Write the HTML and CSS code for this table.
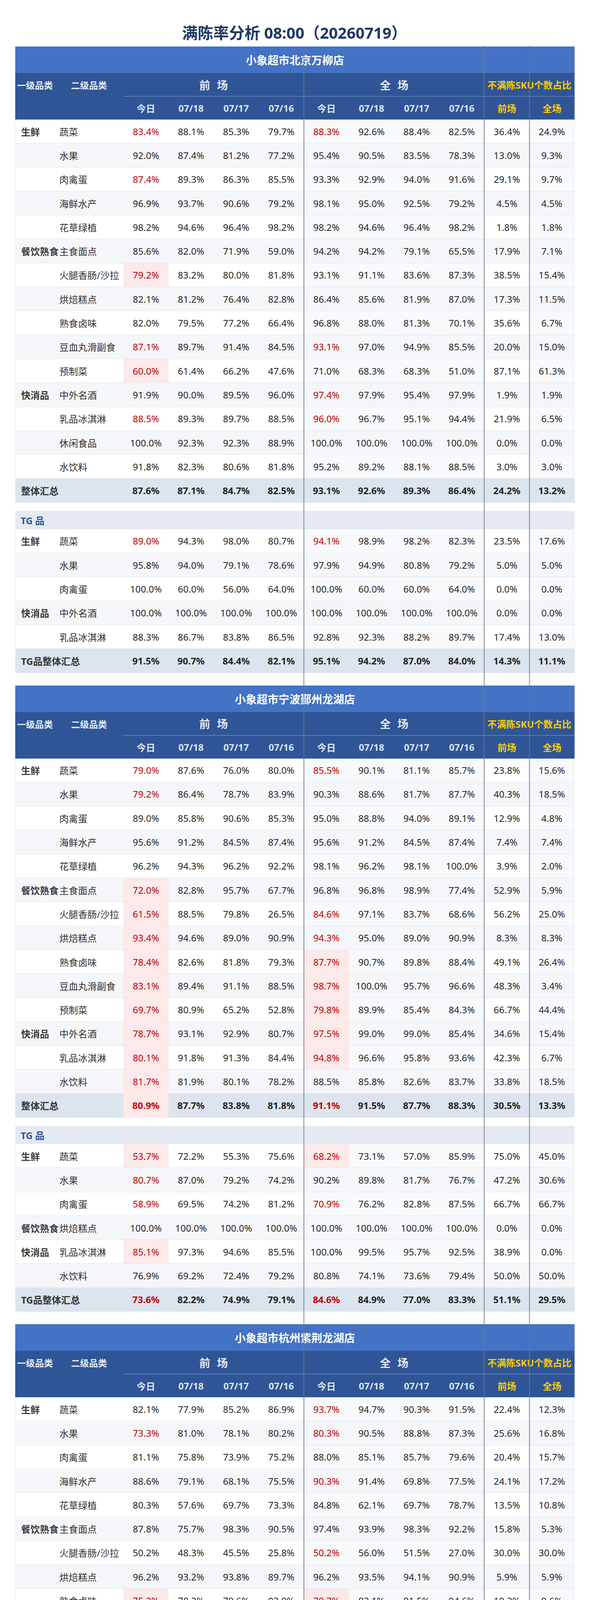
FILE: index.html
```html
<!DOCTYPE html>
<html lang="zh-CN">
<head>
<meta charset="utf-8">
<title>满陈率分析</title>
<link rel="stylesheet" href="styles.css">
</head>
<body>
<main class="page">
  <h1 class="title">满陈率分析 08:00（20260719）</h1>
  <div class="board">

    <!-- ========== 北京万柳店 ========== -->
    <section class="store">
      <div class="store-name">小象超市北京万柳店</div>
      <div class="row head head-a"><span class="cat">一级品类</span><span class="cat">二级品类</span><span class="group">前 场</span><span class="group">全 场</span><span class="sku">不满陈SKU个数占比</span></div>
      <div class="row head head-b"><span></span><span></span><span>今日</span><span>07/18</span><span>07/17</span><span>07/16</span><span>今日</span><span>07/18</span><span>07/17</span><span>07/16</span><span class="y">前场</span><span class="y">全场</span></div>
      <div class="rows">
        <div class="row data"><span class="c1">生鲜</span><span class="c2">蔬菜</span><span class="r">83.4%</span><span>88.1%</span><span>85.3%</span><span>79.7%</span><span class="r">88.3%</span><span>92.6%</span><span>88.4%</span><span>82.5%</span><span>36.4%</span><span>24.9%</span></div>
        <div class="row data"><span class="c1"></span><span class="c2">水果</span><span>92.0%</span><span>87.4%</span><span>81.2%</span><span>77.2%</span><span>95.4%</span><span>90.5%</span><span>83.5%</span><span>78.3%</span><span>13.0%</span><span>9.3%</span></div>
        <div class="row data"><span class="c1"></span><span class="c2">肉禽蛋</span><span class="r">87.4%</span><span>89.3%</span><span>86.3%</span><span>85.5%</span><span>93.3%</span><span>92.9%</span><span>94.0%</span><span>91.6%</span><span>29.1%</span><span>9.7%</span></div>
        <div class="row data"><span class="c1"></span><span class="c2">海鲜水产</span><span>96.9%</span><span>93.7%</span><span>90.6%</span><span>79.2%</span><span>98.1%</span><span>95.0%</span><span>92.5%</span><span>79.2%</span><span>4.5%</span><span>4.5%</span></div>
        <div class="row data"><span class="c1"></span><span class="c2">花草绿植</span><span>98.2%</span><span>94.6%</span><span>96.4%</span><span>98.2%</span><span>98.2%</span><span>94.6%</span><span>96.4%</span><span>98.2%</span><span>1.8%</span><span>1.8%</span></div>
        <div class="row data"><span class="c1">餐饮熟食</span><span class="c2">主食面点</span><span>85.6%</span><span>82.0%</span><span>71.9%</span><span>59.0%</span><span>94.2%</span><span>94.2%</span><span>79.1%</span><span>65.5%</span><span>17.9%</span><span>7.1%</span></div>
        <div class="row data"><span class="c1"></span><span class="c2">火腿香肠/沙拉</span><span class="r p">79.2%</span><span>83.2%</span><span>80.0%</span><span>81.8%</span><span>93.1%</span><span>91.1%</span><span>83.6%</span><span>87.3%</span><span>38.5%</span><span>15.4%</span></div>
        <div class="row data"><span class="c1"></span><span class="c2">烘焙糕点</span><span>82.1%</span><span>81.2%</span><span>76.4%</span><span>82.8%</span><span>86.4%</span><span>85.6%</span><span>81.9%</span><span>87.0%</span><span>17.3%</span><span>11.5%</span></div>
        <div class="row data"><span class="c1"></span><span class="c2">熟食卤味</span><span>82.0%</span><span>79.5%</span><span>77.2%</span><span>66.4%</span><span>96.8%</span><span>88.0%</span><span>81.3%</span><span>70.1%</span><span>35.6%</span><span>6.7%</span></div>
        <div class="row data"><span class="c1"></span><span class="c2">豆血丸滑副食</span><span class="r">87.1%</span><span>89.7%</span><span>91.4%</span><span>84.5%</span><span class="r">93.1%</span><span>97.0%</span><span>94.9%</span><span>85.5%</span><span>20.0%</span><span>15.0%</span></div>
        <div class="row data"><span class="c1"></span><span class="c2">预制菜</span><span class="r p">60.0%</span><span>61.4%</span><span>66.2%</span><span>47.6%</span><span>71.0%</span><span>68.3%</span><span>68.3%</span><span>51.0%</span><span>87.1%</span><span>61.3%</span></div>
        <div class="row data"><span class="c1">快消品</span><span class="c2">中外名酒</span><span>91.9%</span><span>90.0%</span><span>89.5%</span><span>96.0%</span><span class="r">97.4%</span><span>97.9%</span><span>95.4%</span><span>97.9%</span><span>1.9%</span><span>1.9%</span></div>
        <div class="row data"><span class="c1"></span><span class="c2">乳品冰淇淋</span><span class="r">88.5%</span><span>89.3%</span><span>89.7%</span><span>88.5%</span><span class="r">96.0%</span><span>96.7%</span><span>95.1%</span><span>94.4%</span><span>21.9%</span><span>6.5%</span></div>
        <div class="row data"><span class="c1"></span><span class="c2">休闲食品</span><span>100.0%</span><span>92.3%</span><span>92.3%</span><span>88.9%</span><span>100.0%</span><span>100.0%</span><span>100.0%</span><span>100.0%</span><span>0.0%</span><span>0.0%</span></div>
        <div class="row data"><span class="c1"></span><span class="c2">水饮料</span><span>91.8%</span><span>82.3%</span><span>80.6%</span><span>81.8%</span><span>95.2%</span><span>89.2%</span><span>88.1%</span><span>88.5%</span><span>3.0%</span><span>3.0%</span></div>
      </div>
      <div class="row total"><span class="lbl">整体汇总</span><span>87.6%</span><span>87.1%</span><span>84.7%</span><span>82.5%</span><span>93.1%</span><span>92.6%</span><span>89.3%</span><span>86.4%</span><span>24.2%</span><span>13.2%</span></div>

      <div class="tg">
        <div class="tg-head">TG 品</div>
        <div class="rows">
          <div class="row data"><span class="c1">生鲜</span><span class="c2">蔬菜</span><span class="r">89.0%</span><span>94.3%</span><span>98.0%</span><span>80.7%</span><span class="r">94.1%</span><span>98.9%</span><span>98.2%</span><span>82.3%</span><span>23.5%</span><span>17.6%</span></div>
          <div class="row data"><span class="c1"></span><span class="c2">水果</span><span>95.8%</span><span>94.0%</span><span>79.1%</span><span>78.6%</span><span>97.9%</span><span>94.9%</span><span>80.8%</span><span>79.2%</span><span>5.0%</span><span>5.0%</span></div>
          <div class="row data"><span class="c1"></span><span class="c2">肉禽蛋</span><span>100.0%</span><span>60.0%</span><span>56.0%</span><span>64.0%</span><span>100.0%</span><span>60.0%</span><span>60.0%</span><span>64.0%</span><span>0.0%</span><span>0.0%</span></div>
          <div class="row data"><span class="c1">快消品</span><span class="c2">中外名酒</span><span>100.0%</span><span>100.0%</span><span>100.0%</span><span>100.0%</span><span>100.0%</span><span>100.0%</span><span>100.0%</span><span>100.0%</span><span>0.0%</span><span>0.0%</span></div>
          <div class="row data"><span class="c1"></span><span class="c2">乳品冰淇淋</span><span>88.3%</span><span>86.7%</span><span>83.8%</span><span>86.5%</span><span>92.8%</span><span>92.3%</span><span>88.2%</span><span>89.7%</span><span>17.4%</span><span>13.0%</span></div>
        </div>
        <div class="row total"><span class="lbl">TG品整体汇总</span><span>91.5%</span><span>90.7%</span><span>84.4%</span><span>82.1%</span><span>95.1%</span><span>94.2%</span><span>87.0%</span><span>84.0%</span><span>14.3%</span><span>11.1%</span></div>
      </div>
    </section>

    <!-- ========== 宁波鄞州龙湖店 ========== -->
    <section class="store">
      <div class="store-name">小象超市宁波鄞州龙湖店</div>
      <div class="row head head-a"><span class="cat">一级品类</span><span class="cat">二级品类</span><span class="group">前 场</span><span class="group">全 场</span><span class="sku">不满陈SKU个数占比</span></div>
      <div class="row head head-b"><span></span><span></span><span>今日</span><span>07/18</span><span>07/17</span><span>07/16</span><span>今日</span><span>07/18</span><span>07/17</span><span>07/16</span><span class="y">前场</span><span class="y">全场</span></div>
      <div class="rows">
        <div class="row data"><span class="c1">生鲜</span><span class="c2">蔬菜</span><span class="r">79.0%</span><span>87.6%</span><span>76.0%</span><span>80.0%</span><span class="r">85.5%</span><span>90.1%</span><span>81.1%</span><span>85.7%</span><span>23.8%</span><span>15.6%</span></div>
        <div class="row data"><span class="c1"></span><span class="c2">水果</span><span class="r">79.2%</span><span>86.4%</span><span>78.7%</span><span>83.9%</span><span>90.3%</span><span>88.6%</span><span>81.7%</span><span>87.7%</span><span>40.3%</span><span>18.5%</span></div>
        <div class="row data"><span class="c1"></span><span class="c2">肉禽蛋</span><span>89.0%</span><span>85.8%</span><span>90.6%</span><span>85.3%</span><span>95.0%</span><span>88.8%</span><span>94.0%</span><span>89.1%</span><span>12.9%</span><span>4.8%</span></div>
        <div class="row data"><span class="c1"></span><span class="c2">海鲜水产</span><span>95.6%</span><span>91.2%</span><span>84.5%</span><span>87.4%</span><span>95.6%</span><span>91.2%</span><span>84.5%</span><span>87.4%</span><span>7.4%</span><span>7.4%</span></div>
        <div class="row data"><span class="c1"></span><span class="c2">花草绿植</span><span>96.2%</span><span>94.3%</span><span>96.2%</span><span>92.2%</span><span>98.1%</span><span>96.2%</span><span>98.1%</span><span>100.0%</span><span>3.9%</span><span>2.0%</span></div>
        <div class="row data"><span class="c1">餐饮熟食</span><span class="c2">主食面点</span><span class="r p">72.0%</span><span>82.8%</span><span>95.7%</span><span>67.7%</span><span>96.8%</span><span>96.8%</span><span>98.9%</span><span>77.4%</span><span>52.9%</span><span>5.9%</span></div>
        <div class="row data"><span class="c1"></span><span class="c2">火腿香肠/沙拉</span><span class="r p">61.5%</span><span>88.5%</span><span>79.8%</span><span>26.5%</span><span class="r">84.6%</span><span>97.1%</span><span>83.7%</span><span>68.6%</span><span>56.2%</span><span>25.0%</span></div>
        <div class="row data"><span class="c1"></span><span class="c2">烘焙糕点</span><span class="r p">93.4%</span><span>94.6%</span><span>89.0%</span><span>90.9%</span><span class="r">94.3%</span><span>95.0%</span><span>89.0%</span><span>90.9%</span><span>8.3%</span><span>8.3%</span></div>
        <div class="row data"><span class="c1"></span><span class="c2">熟食卤味</span><span class="r p">78.4%</span><span>82.6%</span><span>81.8%</span><span>79.3%</span><span class="r p">87.7%</span><span>90.7%</span><span>89.8%</span><span>88.4%</span><span>49.1%</span><span>26.4%</span></div>
        <div class="row data"><span class="c1"></span><span class="c2">豆血丸滑副食</span><span class="r p">83.1%</span><span>89.4%</span><span>91.1%</span><span>88.5%</span><span class="r p">98.7%</span><span>100.0%</span><span>95.7%</span><span>96.6%</span><span>48.3%</span><span>3.4%</span></div>
        <div class="row data"><span class="c1"></span><span class="c2">预制菜</span><span class="r p">69.7%</span><span>80.9%</span><span>65.2%</span><span>52.8%</span><span class="r p">79.8%</span><span>89.9%</span><span>85.4%</span><span>84.3%</span><span>66.7%</span><span>44.4%</span></div>
        <div class="row data"><span class="c1">快消品</span><span class="c2">中外名酒</span><span class="r p">78.7%</span><span>93.1%</span><span>92.9%</span><span>80.7%</span><span class="r p">97.5%</span><span>99.0%</span><span>99.0%</span><span>85.4%</span><span>34.6%</span><span>15.4%</span></div>
        <div class="row data"><span class="c1"></span><span class="c2">乳品冰淇淋</span><span class="r p">80.1%</span><span>91.8%</span><span>91.3%</span><span>84.4%</span><span class="r p">94.8%</span><span>96.6%</span><span>95.8%</span><span>93.6%</span><span>42.3%</span><span>6.7%</span></div>
        <div class="row data"><span class="c1"></span><span class="c2">水饮料</span><span class="r p">81.7%</span><span>81.9%</span><span>80.1%</span><span>78.2%</span><span>88.5%</span><span>85.8%</span><span>82.6%</span><span>83.7%</span><span>33.8%</span><span>18.5%</span></div>
      </div>
      <div class="row total"><span class="lbl">整体汇总</span><span class="r p">80.9%</span><span>87.7%</span><span>83.8%</span><span>81.8%</span><span class="r">91.1%</span><span>91.5%</span><span>87.7%</span><span>88.3%</span><span>30.5%</span><span>13.3%</span></div>

      <div class="tg">
        <div class="tg-head">TG 品</div>
        <div class="rows">
          <div class="row data"><span class="c1">生鲜</span><span class="c2">蔬菜</span><span class="r p">53.7%</span><span>72.2%</span><span>55.3%</span><span>75.6%</span><span class="r p">68.2%</span><span>73.1%</span><span>57.0%</span><span>85.9%</span><span>75.0%</span><span>45.0%</span></div>
          <div class="row data"><span class="c1"></span><span class="c2">水果</span><span class="r">80.7%</span><span>87.0%</span><span>79.2%</span><span>74.2%</span><span>90.2%</span><span>89.8%</span><span>81.7%</span><span>76.7%</span><span>47.2%</span><span>30.6%</span></div>
          <div class="row data"><span class="c1"></span><span class="c2">肉禽蛋</span><span class="r">58.9%</span><span>69.5%</span><span>74.2%</span><span>81.2%</span><span class="r">70.9%</span><span>76.2%</span><span>82.8%</span><span>87.5%</span><span>66.7%</span><span>66.7%</span></div>
          <div class="row data"><span class="c1">餐饮熟食</span><span class="c2">烘焙糕点</span><span>100.0%</span><span>100.0%</span><span>100.0%</span><span>100.0%</span><span>100.0%</span><span>100.0%</span><span>100.0%</span><span>100.0%</span><span>0.0%</span><span>0.0%</span></div>
          <div class="row data"><span class="c1">快消品</span><span class="c2">乳品冰淇淋</span><span class="r p">85.1%</span><span>97.3%</span><span>94.6%</span><span>85.5%</span><span>100.0%</span><span>99.5%</span><span>95.7%</span><span>92.5%</span><span>38.9%</span><span>0.0%</span></div>
          <div class="row data"><span class="c1"></span><span class="c2">水饮料</span><span>76.9%</span><span>69.2%</span><span>72.4%</span><span>79.2%</span><span>80.8%</span><span>74.1%</span><span>73.6%</span><span>79.4%</span><span>50.0%</span><span>50.0%</span></div>
        </div>
        <div class="row total"><span class="lbl">TG品整体汇总</span><span class="r">73.6%</span><span>82.2%</span><span>74.9%</span><span>79.1%</span><span class="r">84.6%</span><span>84.9%</span><span>77.0%</span><span>83.3%</span><span>51.1%</span><span>29.5%</span></div>
      </div>
    </section>

    <!-- ========== 杭州紫荆龙湖店 ========== -->
    <section class="store">
      <div class="store-name">小象超市杭州紫荆龙湖店</div>
      <div class="row head head-a"><span class="cat">一级品类</span><span class="cat">二级品类</span><span class="group">前 场</span><span class="group">全 场</span><span class="sku">不满陈SKU个数占比</span></div>
      <div class="row head head-b"><span></span><span></span><span>今日</span><span>07/18</span><span>07/17</span><span>07/16</span><span>今日</span><span>07/18</span><span>07/17</span><span>07/16</span><span class="y">前场</span><span class="y">全场</span></div>
      <div class="rows">
        <div class="row data"><span class="c1">生鲜</span><span class="c2">蔬菜</span><span>82.1%</span><span>77.9%</span><span>85.2%</span><span>86.9%</span><span class="r">93.7%</span><span>94.7%</span><span>90.3%</span><span>91.5%</span><span>22.4%</span><span>12.3%</span></div>
        <div class="row data"><span class="c1"></span><span class="c2">水果</span><span class="r">73.3%</span><span>81.0%</span><span>78.1%</span><span>80.2%</span><span class="r">80.3%</span><span>90.5%</span><span>88.8%</span><span>87.3%</span><span>25.6%</span><span>16.8%</span></div>
        <div class="row data"><span class="c1"></span><span class="c2">肉禽蛋</span><span>81.1%</span><span>75.8%</span><span>73.9%</span><span>75.2%</span><span>88.0%</span><span>85.1%</span><span>85.7%</span><span>79.6%</span><span>20.4%</span><span>15.7%</span></div>
        <div class="row data"><span class="c1"></span><span class="c2">海鲜水产</span><span>88.6%</span><span>79.1%</span><span>68.1%</span><span>75.5%</span><span class="r">90.3%</span><span>91.4%</span><span>69.8%</span><span>77.5%</span><span>24.1%</span><span>17.2%</span></div>
        <div class="row data"><span class="c1"></span><span class="c2">花草绿植</span><span>80.3%</span><span>57.6%</span><span>69.7%</span><span>73.3%</span><span>84.8%</span><span>62.1%</span><span>69.7%</span><span>78.7%</span><span>13.5%</span><span>10.8%</span></div>
        <div class="row data"><span class="c1">餐饮熟食</span><span class="c2">主食面点</span><span>87.8%</span><span>75.7%</span><span>98.3%</span><span>90.5%</span><span>97.4%</span><span>93.9%</span><span>98.3%</span><span>92.2%</span><span>15.8%</span><span>5.3%</span></div>
        <div class="row data"><span class="c1"></span><span class="c2">火腿香肠/沙拉</span><span>50.2%</span><span>48.3%</span><span>45.5%</span><span>25.8%</span><span class="r">50.2%</span><span>56.0%</span><span>51.5%</span><span>27.0%</span><span>30.0%</span><span>30.0%</span></div>
        <div class="row data"><span class="c1"></span><span class="c2">烘焙糕点</span><span>96.2%</span><span>93.2%</span><span>93.8%</span><span>89.7%</span><span>96.2%</span><span>93.5%</span><span>94.1%</span><span>90.9%</span><span>5.9%</span><span>5.9%</span></div>
        <div class="row data"><span class="c1"></span><span class="c2">熟食卤味</span><span class="r p">75.2%</span><span>78.2%</span><span>79.6%</span><span>92.9%</span><span class="r p">79.7%</span><span>82.1%</span><span>81.5%</span><span>94.6%</span><span>19.2%</span><span>9.6%</span></div>
        <div class="row data"><span class="c1"></span><span class="c2">豆血丸滑副食</span><span>88.6%</span><span>73.0%</span><span>93.4%</span><span>95.5%</span><span class="r">97.6%</span><span>100.0%</span><span>97.0%</span><span>97.0%</span><span>24.1%</span><span>10.3%</span></div>
        <div class="row data"><span class="c1"></span><span class="c2">预制菜</span><span>51.7%</span><span>37.5%</span><span>55.7%</span><span>65.2%</span><span class="r p">52.4%</span><span>58.1%</span><span>58.1%</span><span>68.5%</span><span>35.5%</span><span>32.3%</span></div>
        <div class="row data"><span class="c1">快消品</span><span class="c2">中外名酒</span><span>88.5%</span><span>84.2%</span><span>93.1%</span><span>90.0%</span><span class="r">94.3%</span><span>94.4%</span><span>96.0%</span><span>92.6%</span><span>56.2%</span><span>47.9%</span></div>
        <div class="row data"><span class="c1"></span><span class="c2">乳品冰淇淋</span><span>89.4%</span><span>86.0%</span><span>92.8%</span><span>91.9%</span><span class="r">96.2%</span><span>97.4%</span><span>96.3%</span><span>95.6%</span><span>19.7%</span><span>6.2%</span></div>
        <div class="row data"><span class="c1"></span><span class="c2">水饮料</span><span>88.5%</span><span>86.9%</span><span>92.6%</span><span>93.2%</span><span class="r">92.6%</span><span>94.2%</span><span>95.7%</span><span>97.2%</span><span>17.7%</span><span>8.1%</span></div>
      </div>
      <div class="row total"><span class="lbl">整体汇总</span><span>83.3%</span><span>81.3%</span><span>85.6%</span><span>86.6%</span><span class="r">90.2%</span><span>92.7%</span><span>91.1%</span><span>91.0%</span><span>22.8%</span><span>13.9%</span></div>

      <div class="tg">
        <div class="tg-head">TG 品</div>
        <div class="rows">
          <div class="row data"><span class="c1">生鲜</span><span class="c2">蔬菜</span><span>83.1%</span><span>73.1%</span><span>81.8%</span><span>92.7%</span><span class="r">95.6%</span><span>96.6%</span><span>83.6%</span><span>93.2%</span><span>26.3%</span><span>10.5%</span></div>
          <div class="row data"><span class="c1"></span><span class="c2">水果</span><span class="r p">66.8%</span><span>79.1%</span><span>79.6%</span><span>80.3%</span><span class="r p">76.5%</span><span>92.0%</span><span>88.6%</span><span>93.1%</span><span>31.6%</span><span>15.8%</span></div>
          <div class="row data"><span class="c1">餐饮熟食</span><span class="c2">熟食卤味</span><span>32.0%</span><span>28.0%</span><span>35.2%</span><span>96.8%</span><span>32.0%</span><span>31.2%</span><span>35.2%</span><span>100.0%</span><span>50.0%</span><span>50.0%</span></div>
          <div class="row data"><span class="c1"></span><span class="c2">预制菜</span><span>10.0%</span><span>2.7%</span><span>9.1%</span><span>30.0%</span><span class="r p">10.0%</span><span>16.4%</span><span>9.1%</span><span>40.0%</span><span>100.0%</span><span>100.0%</span></div>
          <div class="row data"><span class="c1">快消品</span><span class="c2">乳品冰淇淋</span><span>88.7%</span><span>84.2%</span><span>92.4%</span><span>92.6%</span><span class="r">97.3%</span><span>98.3%</span><span>97.2%</span><span>98.5%</span><span>25.0%</span><span>6.2%</span></div>
          <div class="row data"><span class="c1"></span><span class="c2">水饮料</span><span class="r p">71.7%</span><span>72.9%</span><span>74.7%</span><span>64.8%</span><span class="r p">77.4%</span><span>88.7%</span><span>82.1%</span><span>100.0%</span><span>28.6%</span><span>14.3%</span></div>
        </div>
        <div class="row total"><span class="lbl">TG品整体汇总</span><span class="r">75.5%</span><span>76.7%</span><span>81.6%</span><span>86.9%</span><span class="r">84.5%</span><span>91.6%</span><span>87.4%</span><span>95.6%</span><span>31.3%</span><span>16.4%</span></div>
      </div>
    </section>

    <div class="vline v1"></div>
    <div class="vline v2"></div>
    <div class="vline v3"></div>
  </div>
</main>
</body>
</html>
```

FILE: styles.css
```css
html, body {
  margin: 0;
  padding: 0;
  background: #ffffff;
}

body {
  font-family: "Noto Sans", "Noto Sans CJK SC", sans-serif;
  color: #262626;
}

.page {
  width: 1509px;
}

.title {
  margin: 0;
  padding: 59px 0 10px;
  height: 50px;
  line-height: 50px;
  text-align: center;
  font-size: 40px;
  font-weight: 700;
  color: #1f3864;
}

.board {
  position: relative;
  width: 1433px;
  margin-left: 39px;
}

.store + .store {
  margin-top: 32px;
}

.store-name {
  height: 68px;
  background: #4472c4;
  color: #ffffff;
  font-size: 28px;
  font-weight: 700;
  display: flex;
  align-items: center;
  justify-content: center;
}

.row {
  display: grid;
  grid-template-columns: 101px 176px repeat(10, 1fr);
}

.row > span {
  display: flex;
  align-items: center;
  justify-content: center;
  white-space: nowrap;
  box-sizing: border-box;
  min-width: 0;
}

/* header */
.head {
  background: #2f5597;
  font-weight: 700;
}

.head-a {
  height: 60px;
}

.head-b {
  height: 59px;
}

.head > span {
  color: #dde5f3;
  font-size: 24px;
}

.head > .cat {
  font-size: 23px;
  color: #e6ecf7;
}

.head > .group {
  grid-column: span 4;
  font-size: 28px;
  word-spacing: 10px;
  color: #e3e9f5;
  border-bottom: 1px solid #8aa1cb;
}

.head > .sku {
  grid-column: span 2;
  color: #ffcc00;
  border-bottom: 1px solid #8aa1cb;
}

.head > .y {
  color: #ffcc00;
}

/* data rows */
.data {
  height: 61.3px;
  box-sizing: border-box;
  border-bottom: 1px solid #e2e5ea;
  font-size: 24px;
}

.rows > .data:nth-child(odd) {
  background: linear-gradient(to right,
    #ffffff 0, #ffffff 739.4px,
    #f8f9fb 739.4px, #f8f9fb 1201.8px,
    #ffffff 1201.8px, #ffffff 1317.4px,
    #f8f9fb 1317.4px);
}

.rows > .data:nth-child(even) {
  background: #f5f6f9;
}

.data > span:first-child,
.total > span:first-child {
  border-left: 1px solid #e4e7eb;
}

.data > span:last-child,
.total > span:last-child {
  border-right: 1px solid #e4e7eb;
}

.data > .c1 {
  justify-content: flex-start;
  padding-left: 14px;
  font-weight: 700;
  color: #3c3c3c;
  overflow: visible;
}

.data > .c2 {
  justify-content: flex-start;
  padding-left: 12px;
  color: #333333;
}

.r {
  color: #c00000;
}

.row > .p {
  background: #fce9e9;
}

/* totals */
.total {
  height: 61.3px;
  box-sizing: border-box;
  background: #dce4ee;
  border-bottom: 1px solid #e2e5ea;
  font-size: 24px;
  font-weight: 700;
  color: #222222;
}

.total > .lbl {
  grid-column: span 2;
  justify-content: flex-start;
  padding-left: 14px;
  color: #333333;
}

.total > .r {
  color: #c00000;
}

/* TG section */
.tg {
  margin-top: 21px;
}

.tg-head {
  height: 47px;
  box-sizing: border-box;
  background: #e5eaf2;
  color: #2f5597;
  font-size: 24px;
  font-weight: 700;
  display: flex;
  align-items: center;
  padding-left: 14px;
}

/* group divider lines drawn over the whole board */
.vline {
  position: absolute;
  top: -2px;
  bottom: 0;
  width: 3px;
  background: rgba(105, 120, 138, 0.6);
  pointer-events: none;
}

.v1 {
  left: 738px;
}

.v2 {
  left: 1200.3px;
}

.v3 {
  left: 1316px;
}
```
